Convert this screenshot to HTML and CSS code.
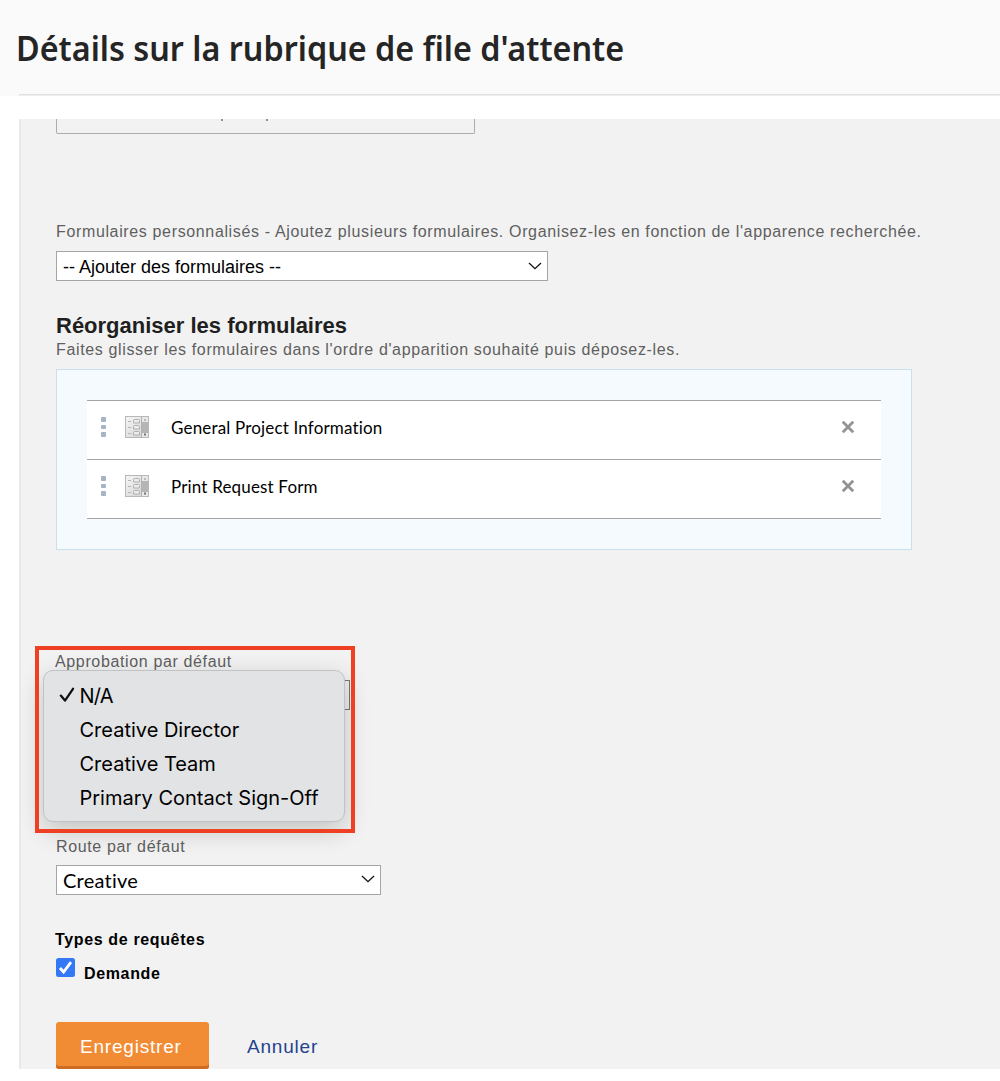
FILE: index.html
```html
<!DOCTYPE html>
<html lang="fr">
<head>
<meta charset="utf-8">
<title>Détails sur la rubrique de file d'attente</title>
<link rel="stylesheet" href="styles.css">
</head>
<body>
<header class="page-header"><h1 class="title">Détails sur la rubrique de file d'attente</h1></header>
<main class="panel">
  <div class="cut-field"><i></i><i></i></div>

  <p class="label label-forms">Formulaires personnalisés - Ajoutez plusieurs formulaires. Organisez-les en fonction de l'apparence recherchée.</p>
  <div class="select select-forms"><span>-- Ajouter des formulaires --</span>
    <svg class="chevron" viewBox="0 0 14 8"><path d="M1 1l6 5.7L13 1"/></svg></div>

  <h2 class="subtitle">Réorganiser les formulaires</h2>
  <p class="label label-hint">Faites glisser les formulaires dans l'ordre d'apparition souhaité puis déposez-les.</p>

  <div class="sorter">
    <ul class="forms">
      <li class="form-row">
        <span class="grip"><i></i><i></i><i></i></span>
        <svg class="form-icon" viewBox="0 0 24 22"><use href="#form"/></svg>
        <span class="form-name">General Project Information</span>
        <svg class="remove" viewBox="0 0 12 12"><path d="M1.500 1.500l9 9M10.500 1.500l-9 9"/></svg>
      </li>
      <li class="form-row">
        <span class="grip"><i></i><i></i><i></i></span>
        <svg class="form-icon" viewBox="0 0 24 22"><use href="#form"/></svg>
        <span class="form-name">Print Request Form</span>
        <svg class="remove" viewBox="0 0 12 12"><path d="M1.500 1.500l9 9M10.500 1.500l-9 9"/></svg>
      </li>
    </ul>
  </div>

  <section class="approval">
    <p class="label label-approval">Approbation par défaut</p>
    <div class="select select-approval"></div>
    <ul class="menu">
      <li class="chosen"><svg class="tick" viewBox="0 0 16 16"><path d="M1.8 8.6l4.2 5L14 1.8"/></svg>N/A</li>
      <li>Creative Director</li>
      <li>Creative Team</li>
      <li>Primary Contact Sign-Off</li>
    </ul>
    <div class="highlight"></div>
  </section>

  <p class="label label-route">Route par défaut</p>
  <div class="select select-route"><span>Creative</span>
    <svg class="chevron" viewBox="0 0 14 8"><path d="M1 1l6 5.7L13 1"/></svg></div>

  <h3 class="types">Types de requêtes</h3>
  <div class="check-row">
    <svg class="checkbox" viewBox="0 0 19 19"><rect width="19" height="19" rx="2.5"/><path d="M4 10l3.6 4L15 4.2"/></svg>
    <span class="check-label">Demande</span>
  </div>

  <div class="actions">
    <span class="save">Enregistrer</span>
    <span class="cancel">Annuler</span>
  </div>
</main>

<svg class="defs">
  <defs>
    <linearGradient id="sheet" x1="0" y1="0" x2="1" y2="1"><stop offset="0" stop-color="#f6f6f6"/><stop offset="1" stop-color="#d0d0d0"/></linearGradient>
    <g id="form">
      <rect x=".5" y=".5" width="23" height="21" fill="url(#sheet)" stroke="#b8b8b8"/>
      <path d="M3 5.500h3M3 11.500h3M3 17.500h3" stroke="#b4b4b4"/>
      <path d="M8.500 7V4.500Q8.500 3.500 9.500 3.500h4Q14.500 3.500 14.500 4.500V7zM8.500 13V10.500Q8.500 9.500 9.500 9.500h4Q14.500 9.500 14.500 10.500V13zM8.500 19V16.500Q8.500 15.500 9.500 15.500h4Q14.500 15.500 14.500 16.500V19z" fill="#ececec" stroke="#b0b0b0"/>
      <path d="M16.500 1v20" stroke="#b0b0b0"/>
      <rect x="17" y="1" width="6" height="20" fill="#e8e8e8"/>
      <rect x="17" y="6" width="6" height="11" fill="#b5b5b5"/>
      <path d="M19 4h2" stroke="#aaa" stroke-width="1.500"/>
      <path d="M19 18.500h2" stroke="#777" stroke-width="2"/>
    </g>
  </defs>
</svg>
</body>
</html>
```
FILE: styles.css
```css
* { box-sizing: border-box; margin: 0; padding: 0; }
body { width: 1000px; height: 1081px; overflow: hidden; background: #fff; font-family: "Liberation Sans", Arial, sans-serif; color: #000; }
ul { list-style: none; }
i { display: block; }
svg { display: block; flex: none; }
.defs { width: 0; height: 0; position: absolute; }

.page-header { height: 96px; background: linear-gradient(#e0e0e0, #e0e0e0) 19px 94px / 981px 1.5px no-repeat #fafafa; padding: 23px 0 0 16px; }
.title { font: 600 35px/50px "Noto Sans", "Open Sans", sans-serif; color: #252525; white-space: nowrap; transform: scaleX(.924); transform-origin: 0 0; }

.panel { height: 950px; margin: 23px 0 0 19px; padding-left: 35px; border-left: 2px solid #e9e9e9; background: #f2f2f2; display: flex; flex-direction: column; align-items: flex-start; }
.cut-field { width: 419px; height: 15px; border: 1px solid #acacac; border-top: 0; border-radius: 0 0 2px 2px; display: flex; gap: 43px; padding-left: 164px; }
.cut-field i { width: 2px; height: 2px; background: #8295b8; }

.label { font-size: 16px; line-height: 20px; color: #5f5f5f; letter-spacing: .64px; white-space: nowrap; }
.label-forms { margin-top: 88px; }
.select { height: 30px; background: #fff; border: 1.500px solid #a5a5a5; display: flex; align-items: center; justify-content: space-between; padding: 2px 5px 0 6px; }
.select-forms { width: 492px; margin-top: 9px; font-size: 18px; }
.chevron { width: 14px; height: 8px; fill: none; stroke: #111; stroke-width: 1.300; margin-top: -2px; }
.subtitle { margin-top: 32px; font-size: 22px; line-height: 26px; color: #1f1f1f; }
.label-hint { margin-top: 1px; }

.sorter { width: 856px; height: 181px; margin-top: 9px; padding: 30px 30px 0; border: 1.500px solid #cbe0ec; background: #f5faff; }
.forms { border-top: 1px solid #a5a5a5; }
.form-row { height: 59px; padding: 0 26px 6px 14px; background: #fff; border-bottom: 1px solid #a5a5a5; display: flex; align-items: center; }
.grip { width: 5px; display: grid; gap: 3px; }
.grip i { width: 5px; height: 4.500px; background: #a5b4c3; border-radius: 1px; }
.form-icon { width: 24px; height: 22px; margin-left: 19px; }
.form-name { flex: 1; margin: 2px 0 0 22px; font: 17px/22px Lato, sans-serif; letter-spacing: .17px; }
.remove { width: 14px; height: 14px; fill: none; stroke: #929292; stroke-width: 2.400; }

.approval { position: relative; height: 187px; margin-top: 96px; width: 300px; }
.label-approval { padding-top: 6px; margin-left: -1px; }
.select-approval { width: 294px; margin-top: 8px; border-color: #777; background: #ededed; }
.menu { position: absolute; left: -13px; top: 24px; width: 302px; height: 152px; padding: 8px 0 0 35.500px; background: #e2e3e5; border: 1px solid #c1c2c4; border-radius: 10px; box-shadow: 0 8px 26px rgba(0,0,0,.2); font: 20px/34px Inter, sans-serif; }
.menu li { position: relative; height: 34px; }
.chosen { letter-spacing: -.8px; }
.tick { position: absolute; left: -21px; top: 8px; width: 16px; height: 16px; fill: none; stroke: #111; stroke-width: 2.300; stroke-linecap: round; stroke-linejoin: round; }
.highlight { position: absolute; left: -21px; top: 0; width: 320px; height: 187px; border: 4px solid #ee4023; }

.label-route { margin-top: 4px; }
.select-route { width: 325px; margin-top: 8px; padding-top: 0; font: 20px/26px Lato, sans-serif; letter-spacing: .25px; }
.types { margin-top: 35px; margin-left: -1px; font-size: 16px; line-height: 20px; letter-spacing: .64px; }
.check-row { display: flex; margin-top: 8px; height: 30px; align-items: flex-start; }
.checkbox { width: 19px; height: 19px; }
.checkbox rect { fill: #3478f6; }
.checkbox path { fill: none; stroke: #fff; stroke-width: 2.800; }
.check-label { margin: 6px 0 0 9px; font-size: 16px; line-height: 20px; font-weight: bold; letter-spacing: .64px; }

.actions { display: flex; margin-top: 34px; font-size: 19px; line-height: 24px; letter-spacing: .8px; }
.save { width: 153px; height: 47px; padding: 13px 0 0 24px; border-radius: 3px; background: #f18b34; color: #fff; box-shadow: inset 0 -3px #cd6c22; }
.cancel { margin: 13px 0 0 38px; color: #25428f; }
```
